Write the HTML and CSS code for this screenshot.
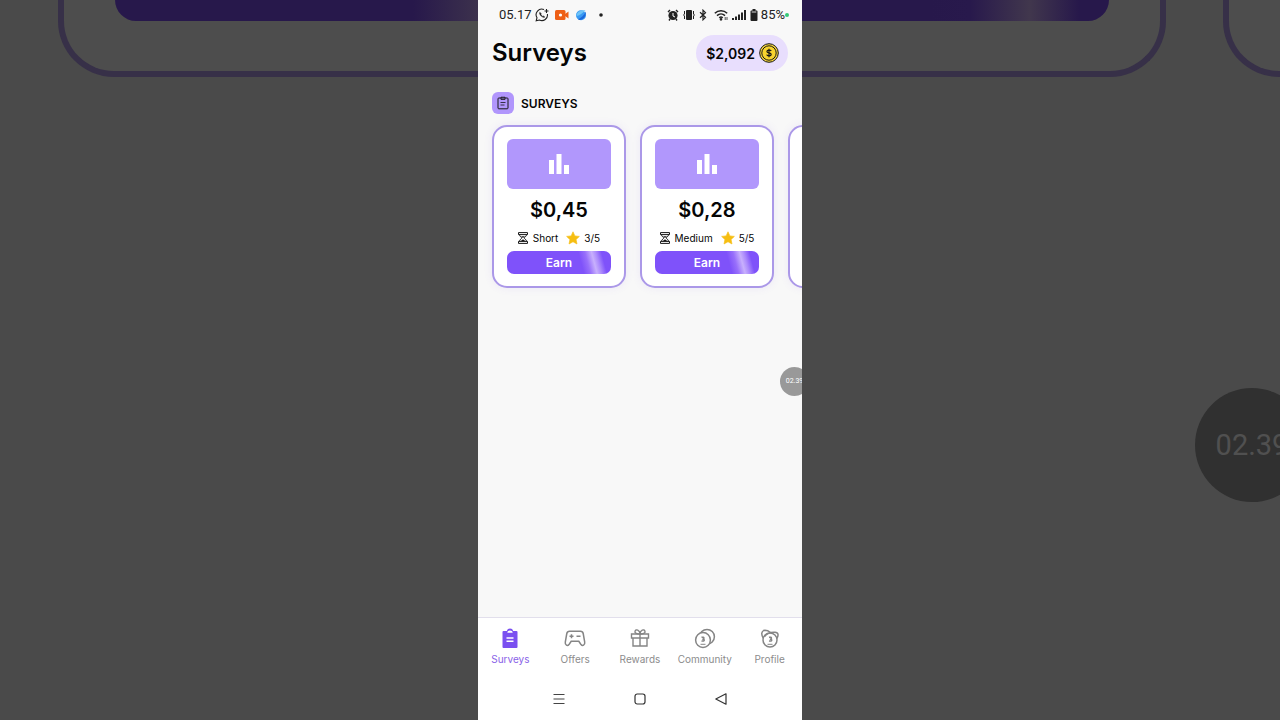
FILE: index.html
```html
<!DOCTYPE html>
<html lang="en">
<head>
<meta charset="utf-8">
<meta name="viewport" content="width=device-width, initial-scale=1">
<title>Surveys</title>
<link rel="stylesheet" href="styles.css">
</head>
<body>
<div class="stage">
  <div class="backdrop" aria-hidden="true">
    <div class="big-card"><div class="big-button"></div></div>
    <div class="big-card"></div>
    <div class="big-timer">02.39</div>
  </div>
  <div class="phone">
    <header class="status">
      <div class="status-group">
        <span class="clock">05.17</span>
        <svg class="s-whatsapp" width="14" height="14" viewBox="0 0 14 14" fill="none" stroke="#222" stroke-width="1.1"><path d="M9 1.6A5.6 5.6 0 0 0 2 9.7L1.2 12.8l3.2-.8A5.6 5.6 0 0 0 12.4 6"/><path d="M4.8 4.2c-.9 1 .2 2.700 1.300 3.800S9 10 9.900 9.100L8.600 7.900l-.9.500L5.900 6.600l.5-.9z" fill="#222" stroke-width=".4"/><path d="M11.500 1v4M9.500 3h4"/></svg>
        <svg class="s-video" width="14" height="10" viewBox="0 0 14 10"><rect width="10.500" height="10" rx="1.500" fill="#ee5f16"/><path d="M10 4l3.500-2.500v7L10 6z" fill="#ee5f16"/><circle cx="5.500" cy="5" r="1.600" fill="#fff"/></svg>
        <svg class="s-ball" width="12" height="12" viewBox="0 0 12 12"><circle cx="6" cy="6.200" r="5" fill="#3a9af3"/><path d="M1.500 7C1.500 3 5 .8 10.500 1.200 8.500 3 5 6.500 1.500 7z" fill="#6fc4f7"/><path d="M3 10.500C6 9 9.500 6 10.800 2.500c.6 5-2.800 9-6.800 8.500z" fill="#1d68da"/></svg>
        <svg class="s-dot" width="4" height="4" viewBox="0 0 4 4"><circle cx="2" cy="2" r="1.800" fill="#222"/></svg>
      </div>
      <div class="status-group right">
        <svg width="12" height="12" viewBox="0 0 12 12"><circle cx="6" cy="6.500" r="4.600" fill="#222"/><path d="M1 3l2-2M11 3L9 1M3 10l-1 1.500M9 10l1 1.500" stroke="#222" stroke-width="1.400"/><path d="M6 4v3l2 1" fill="none" stroke="#fff"/></svg>
        <svg width="12" height="12" viewBox="0 0 12 12"><rect x="3" y="1" width="6" height="10" rx="1" fill="#222"/><path d="M1.500 2v3l-1 1 1 1v3M10.500 2v3l1 1-1 1v3" fill="none" stroke="#222"/></svg>
        <svg width="8" height="12" viewBox="0 0 8 12" fill="none" stroke="#222" stroke-width="1.200"><path d="M1 3.300l5.500 5L4 10.800V1.200l2.500 2.500L1 8.700"/></svg>
        <svg class="s-wifi" width="14" height="12" viewBox="0 0 14 12" fill="none" stroke="#222" stroke-width="1.500"><path d="M.8 4.200c3.500-3.400 8.900-3.400 12.400 0M3 6.600c2.300-2.200 5.700-2.200 8 0M5.200 8.800c1.100-1 2.500-1 3.600 0"/><circle cx="7" cy="10.300" r=".6" fill="#222"/><path d="M11.200 8v3M13 8v3" stroke-width=".8"/></svg>
        <svg width="14" height="12" viewBox="0 0 14 12" fill="#222"><path d="M0 9h2v2H0zM3 7.500h2V11H3zM6 5.500h2V11H6zM9 3.500h2V11H9zM12 1h2v10h-2z"/></svg>
        <svg width="8" height="12" viewBox="0 0 8 12"><path d="M2.500 0h3v1.500H7A1 1 0 0 1 7.500 2.500v8.500a1 1 0 0 1-1 1h-5a1 1 0 0 1-1-1V2.500a1 1 0 0 1 1-1h1z" fill="#222"/><path d="M1.700 3h4.600" stroke="#ddd"/></svg>
        <span class="charge">85%</span>
        <svg class="s-live" width="4" height="4" viewBox="0 0 4 4"><circle cx="2" cy="2" r="2" fill="#35c977"/></svg>
      </div>
    </header>

    <main class="content">
      <div class="title-row">
        <h1 class="title">Surveys</h1>
        <button class="balance" type="button">$2,092
          <svg width="20" height="20" viewBox="0 0 20 20"><circle cx="10" cy="10" r="9.300" fill="#f6d63c" stroke="#171717"/><circle cx="10" cy="10" r="7.200" fill="#f7d32e" stroke="#171717"/><path d="M12.200 8.100C11.700 7 8 6.700 7.900 8.500c0 1.800 4.300 1 4.300 2.900 0 1.900-4.100 1.700-4.500.3M10 5.800v8.400" fill="none" stroke="#171717" stroke-width="1.200"/></svg>
        </button>
      </div>

      <h2 class="section">
        <span class="section-icon"><svg width="14" height="14" viewBox="0 0 14 14" fill="none" stroke="#171717"><rect x="2" y="2" width="10" height="10.800" rx=".8"/><path d="M5 1.200h4v2.300H5zM4.500 6.500h5M4.500 9h4" stroke-width=".8"/></svg></span>
        SURVEYS
      </h2>

      <div class="cards">
        <article class="card">
          <div class="thumb"><svg width="20" height="20" viewBox="0 0 20 20" fill="#fff"><path d="M0 6h5v14H0zM7.500 0h5v20h-5zM15 11h5v9h-5z"/></svg></div>
          <div class="price">$0,45</div>
          <div class="meta">
            <svg class="glass" width="10" height="12" viewBox="0 0 10 12" fill="none" stroke="#171717"><path d="M.5.600h9v2h-9zM.5 9.400h9v2h-9zM1.500 2.600c0 2 2.300 2.700 2.300 3.400s-2.300 1.400-2.300 3.400M8.500 2.600c0 2-2.300 2.700-2.300 3.400s2.300 1.400 2.300 3.400"/><path d="M3 4.300h4L5 6zM2.500 9.200L5 7.200l2.500 2z" fill="#171717" stroke="none"/></svg>
            <span>Short</span>
            <svg class="star" width="14" height="14" viewBox="0 0 14 14"><path d="M7 .8l1.900 4.100 4.500.5-3.300 3.100.9 4.500L7 10.800 3 13l.9-4.500L.6 5.400l4.500-.5z" fill="#f6be11" stroke="#f6be11" stroke-width=".6" stroke-linejoin="round"/></svg>
            <span>3/5</span>
          </div>
          <button class="earn" type="button">Earn</button>
        </article>
        <article class="card">
          <div class="thumb"><svg width="20" height="20" viewBox="0 0 20 20" fill="#fff"><path d="M0 6h5v14H0zM7.500 0h5v20h-5zM15 11h5v9h-5z"/></svg></div>
          <div class="price">$0,28</div>
          <div class="meta">
            <svg class="glass" width="10" height="12" viewBox="0 0 10 12" fill="none" stroke="#171717"><path d="M.5.600h9v2h-9zM.5 9.400h9v2h-9zM1.500 2.600c0 2 2.300 2.700 2.300 3.400s-2.300 1.400-2.300 3.400M8.500 2.600c0 2-2.300 2.700-2.300 3.400s2.300 1.400 2.300 3.400"/><path d="M3 4.300h4L5 6zM2.500 9.200L5 7.200l2.500 2z" fill="#171717" stroke="none"/></svg>
            <span>Medium</span>
            <svg class="star" width="14" height="14" viewBox="0 0 14 14"><path d="M7 .8l1.900 4.100 4.500.5-3.300 3.100.9 4.500L7 10.800 3 13l.9-4.500L.6 5.400l4.500-.5z" fill="#f6be11" stroke="#f6be11" stroke-width=".6" stroke-linejoin="round"/></svg>
            <span>5/5</span>
          </div>
          <button class="earn" type="button">Earn</button>
        </article>
        <article class="card"></article>
      </div>
    </main>

    <div class="timer">02.39</div>

    <nav class="tabs">
      <a class="tab active" href="#surveys">
        <svg width="22" height="22" viewBox="0 0 22 22"><path d="M4.500 3h3.300a3.300 3.300 0 0 1 6.400 0h3.300a1 1 0 0 1 1 1v15a1 1 0 0 1-1 1h-13a1 1 0 0 1-1-1V4a1 1 0 0 1 1-1z" fill="#7a4ff0"/><path d="M8.300 4.700c0-2.900 5.400-2.900 5.400 0z" fill="#fff"/><path d="M7.500 10h7M7.500 13.200h7" fill="none" stroke="#fff" stroke-width="1.400"/></svg>
        Surveys</a>
      <a class="tab" href="#offers">
        <svg width="22" height="22" viewBox="0 0 22 22" fill="none" stroke="#858585" stroke-width="1.500"><path d="M5.500 3.300h11c1.400 0 2.400.8 2.700 2.200l1.500 8.500c.5 3.300-2.100 4.500-3.900 2.200l-2-2.900H7.200l-2 2.900c-1.800 2.300-4.400 1.100-3.900-2.200L2.800 5.500c.3-1.400 1.300-2.200 2.700-2.200z"/><path d="M5.500 8.300h4M7.500 6.300v4M12.500 8.300h4"/></svg>
        Offers</a>
      <a class="tab" href="#rewards">
        <svg width="22" height="22" viewBox="0 0 22 22" fill="none" stroke="#858585" stroke-width="1.400"><path d="M2.500 6h17v4h-17zM4 10h14v8H4zM11 6v12"/><path d="M11 6C8 6 5.500 5.300 6 3.300 6.700.5 11 2 11 6zM11 6c3 0 5.500-.7 5-2.700C15.300.5 11 2 11 6z"/></svg>
        Rewards</a>
      <a class="tab" href="#community">
        <svg width="22" height="22" viewBox="0 0 22 22" fill="none" stroke="#858585" stroke-width="1.500"><circle cx="13" cy="8.800" r="7.400"/><circle cx="9" cy="12" r="7.400" fill="#fff"/><path d="M7.500 9.300c3.300-.7 2.900 1.800.8 1.900 2.700-.2 2.700 2.500-.8 1.800" stroke-width="1.500"/><path d="M6.500 16.300h5" stroke-width="1"/></svg>
        Community</a>
      <a class="tab" href="#profile">
        <svg width="22" height="22" viewBox="0 0 22 22" fill="none" stroke="#858585" stroke-width="1.500"><path d="M4.500 10.500C2 7 2 2.500 6 2.300c2.500 0 4 1 5.500 2.200M17.500 11c2.500-3.500 2-6.500-1.500-6.700-3.500-.2-7.500.2-10.500 4.200"/><circle cx="11" cy="12" r="7"/><path d="M10 9.300c3.300-.7 2.900 1.800.8 1.900 2.700-.2 2.700 2.500-.8 1.800" stroke-width="1.500"/><path d="M8.500 16.300h5" stroke-width="1"/></svg>
        Profile</a>
    </nav>
    <div class="system">
      <button type="button" aria-label="Recent apps"><svg width="14" height="14" viewBox="0 0 14 14" fill="none" stroke="#444" stroke-width="1.200"><path d="M1.500 2.500h11M1.500 7h11M1.500 11.500h11"/></svg></button>
      <button type="button" aria-label="Home"><svg width="14" height="14" viewBox="0 0 14 14" fill="none" stroke="#333" stroke-width="1.200"><rect x="2" y="2" width="10" height="10" rx="2.200"/></svg></button>
      <button type="button" aria-label="Back"><svg width="14" height="14" viewBox="0 0 14 14" fill="none" stroke="#333" stroke-width="1.200" stroke-linejoin="round"><path d="M12 1.800v10.400L1.800 7z"/></svg></button>
    </div>
  </div>
</div>
</body>
</html>
```

FILE: styles.css
```css
* { box-sizing: border-box; }
body {
  margin: 0;
  font-family: Inter, "Liberation Sans", sans-serif;
  color: #050505;
}
svg { display: block; flex: none; }
button { font: inherit; color: inherit; border: 0; cursor: pointer; }

.stage {
  position: relative;
  display: flex;
  justify-content: center;
  min-height: 100vh;
  overflow: hidden;
  background: #4a4a4a;
}

/* Dimmed, enlarged copy of the cards behind the phone */
.backdrop {
  position: absolute;
  inset: 0;
  display: flex;
  align-items: flex-start;
  gap: 57px;
  padding-left: 58px;
  overflow: hidden;
}
.big-card {
  flex: none;
  width: calc(100% - 114px);
  height: 77px;
  padding: 0 51px;
  border: 6px solid #373048;
  border-top: 0;
  border-radius: 0 0 56px 56px;
  background: #4d4d4d;
}
.big-button {
  height: 21px;
  border-radius: 0 0 28px 28px;
  background: linear-gradient(90deg, #27184b 30%, #41374d 38%, #27184b 44%, #27184b 82%, #28194c 86%, #41374d 92%, #27184b 97%);
}
.big-timer {
  position: absolute;
  top: 388px;
  right: -29px;
  width: 114px;
  height: 114px;
  border-radius: 50%;
  background: #303030;
  color: #505050;
  font: 29px/114px Roboto, sans-serif;
  text-align: center;
}

.phone {
  position: relative;
  display: flex;
  flex-direction: column;
  width: 45vh;
  min-width: 324px;
  min-height: 100vh;
  overflow: hidden;
  background: #f8f8f8;
}

.status {
  display: flex;
  justify-content: space-between;
  height: 30px;
  padding: 0 13px 0 21px;
  font: 13px/30px Roboto, sans-serif;
  color: #222;
}
.status-group { display: flex; align-items: center; }
.status-group.right { gap: 4px; }
.s-whatsapp { margin-left: 3px; }
.s-video { margin-left: 6px; }
.s-ball { margin-left: 6px; }
.s-dot { margin-left: 12px; }
.s-wifi { margin-left: 3px; }
.charge { margin-left: -1px; }
.s-live { margin-left: -4px; }

.content { flex: 1; padding: 5px 14px 0; }
.title-row {
  display: flex;
  align-items: center;
  justify-content: space-between;
}
.title { margin: 0; font-size: 24px; line-height: 36px; font-weight: 600; }
.balance {
  display: flex;
  align-items: center;
  gap: 4px;
  height: 36px;
  padding: 0 9px 0 10px;
  border-radius: 18px;
  background: #e8defd;
  font-size: 14px;
  font-weight: 600;
}
.section {
  display: flex;
  align-items: center;
  gap: 7px;
  margin: 21px 0 11px;
  font-size: 12px;
  line-height: 21px;
  font-weight: 600;
}
.section-icon {
  display: grid;
  place-items: center;
  width: 22px;
  height: 22px;
  border-radius: 6px;
  background: #b196fc;
}

.cards {
  display: flex;
  gap: 14px;
  margin-right: -14px;
}
.card {
  flex: 0 0 134px;
  padding: 12px 13px;
  border: 2px solid #ab98e8;
  border-radius: 15px;
  background: #fff;
  box-shadow: 0 0 8px rgba(130, 90, 230, 0.1);
}
.thumb {
  display: grid;
  place-items: center;
  height: 50px;
  border-radius: 6px;
  background: #b197fc;
}
.price {
  margin-top: 7px;
  font-size: 20px;
  line-height: 28px;
  font-weight: 600;
  text-align: center;
}
.meta {
  display: flex;
  align-items: center;
  justify-content: center;
  height: 15px;
  margin: 6px 0;
  font-size: 10px;
  white-space: nowrap;
}
.glass { margin-right: 5px; }
.star { margin: 0 4px 0 8px; }
.earn {
  display: block;
  width: 100%;
  height: 23px;
  padding: 0;
  border-radius: 7px;
  background: linear-gradient(75deg, #7f52fa 70%, #986ffb 76%, #c8b0fd 82%, #ac8bfc 86%, #7f52fa 91%);
  color: #fff;
  font-size: 12px;
  font-weight: 600;
}

/* Floating recorder bubble, half off the edge */
.timer {
  position: absolute;
  top: 367px;
  right: -7px;
  width: 29px;
  height: 29px;
  border-radius: 50%;
  background: #999;
  color: #fff;
  font: 7px/29px Roboto, sans-serif;
  text-align: center;
}

.tabs {
  display: grid;
  grid-template-columns: repeat(5, 1fr);
  height: 61px;
  padding-top: 10px;
  border-top: 1px solid #e2dfec;
  background: #fff;
}
.tab {
  display: flex;
  flex-direction: column;
  align-items: center;
  gap: 2px;
  color: #8c8c8c;
  font-size: 10px;
  line-height: 14px;
  text-decoration: none;
}
.tab.active { color: #8a63e8; }

.system {
  display: grid;
  grid-template-columns: repeat(3, 1fr);
  height: 42px;
  padding: 0 40px;
  background: #fff;
}
.system button {
  display: grid;
  place-items: center;
  padding: 0;
  background: none;
}
```
